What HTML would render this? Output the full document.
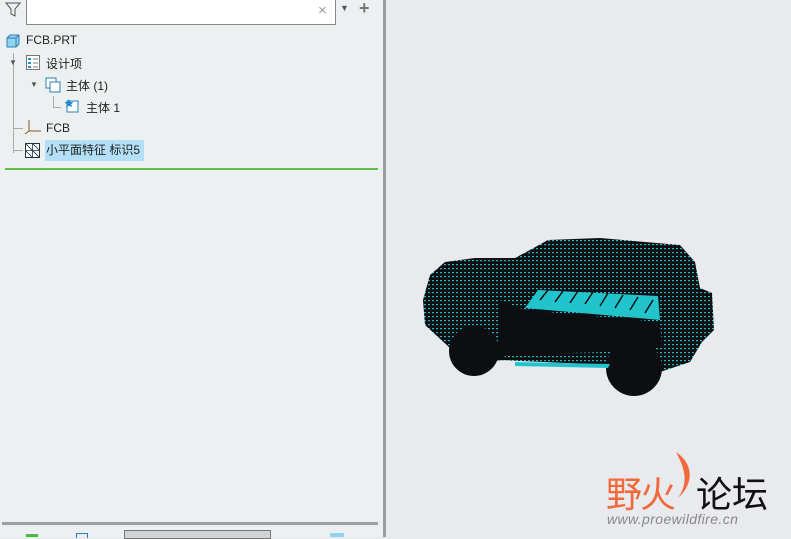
<!DOCTYPE html>
<html><head><meta charset="utf-8"><style>
body{margin:0;width:791px;height:537px;overflow:hidden;background:#e8eaee;font-family:"Liberation Sans","Noto Sans CJK SC",sans-serif;font-size:12px;color:#222;position:relative}
.left{position:absolute;left:0;top:0;width:383px;height:537px;background:#edf0f1}
.div{position:absolute;left:383px;top:0;width:3px;height:537px;background:#9a9fa3}
.t{position:absolute;white-space:nowrap}
.ln{position:absolute;background:#aaa}
</style></head><body>
<div class="left">
  <svg class="t" style="left:5px;top:1px" width="16" height="17"><path d="M1 2h14l-5 6v7l-4-2V8z" fill="none" stroke="#555" stroke-width="1"/></svg>
  <div class="t" style="left:26px;top:-1px;width:308px;height:24px;background:#fff;border:1px solid #888"></div>
  <div class="t" style="left:318px;top:2px;color:#999;font-size:15px">×</div>
  <div class="t" style="left:340px;top:3px;color:#555;font-size:9px">▼</div>
  <div class="t" style="left:359px;top:-2px;color:#777;font-size:18px;font-weight:bold">+</div>
  <svg class="t" style="left:6px;top:34px" width="14" height="14"><path d="M1 4l3-3h9v9l-3 3H1z" fill="#8fd3f0" stroke="#2f7fb0"/><path d="M1 4h9v9M10 4l3-3" fill="none" stroke="#2f7fb0"/></svg>
  <div class="t" style="left:26px;top:33px">FCB.PRT</div>
  <div class="ln" style="left:13px;top:53px;width:1px;height:100px"></div>
  <div class="t" style="left:9px;top:58px;font-size:8px;color:#555">▼</div>
  <svg class="t" style="left:26px;top:55px" width="14" height="15"><rect x="0.5" y="0.5" width="13" height="14" fill="#fff" stroke="#777"/><rect x="2" y="3" width="3" height="2" fill="#2a8fd0"/><rect x="2" y="7" width="3" height="2" fill="#2a8fd0"/><rect x="2" y="11" width="3" height="2" fill="#2a8fd0"/><path d="M7 4h5M7 8h5M7 12h5" stroke="#777"/></svg>
  <div class="t" style="left:46px;top:55px">设计项</div>
  <div class="t" style="left:30px;top:80px;font-size:8px;color:#555">▼</div>
  <svg class="t" style="left:45px;top:77px" width="17" height="17"><rect x="1" y="1" width="10" height="10" fill="#fff" stroke="#2a7fb5"/><rect x="5" y="5" width="10" height="10" fill="#fff" stroke="#2a7fb5"/></svg>
  <div class="t" style="left:66px;top:77px">主体 (1)</div>
  <div class="ln" style="left:53px;top:96px;width:1px;height:11px"></div><div class="ln" style="left:53px;top:107px;width:8px;height:1px"></div>
  <svg class="t" style="left:64px;top:98px" width="16" height="16"><rect x="3" y="3" width="11" height="11" fill="#fff" stroke="#2a7fb5"/><path d="M5 1l1.5 3 3 .3-2.3 2 .7 3-2.9-1.6L2.1 9.3l.7-3L.5 4.3l3-.3z" fill="#1e88d0"/></svg>
  <div class="t" style="left:86px;top:99px">主体 1</div>
  <div class="ln" style="left:13px;top:128px;width:10px;height:1px"></div>
  <svg class="t" style="left:24px;top:119px" width="18" height="16"><path d="M5 1v11h12M5 12l-4 3" fill="none" stroke="#7a5a20"/></svg>
  <div class="t" style="left:46px;top:121px">FCB</div>
  <div class="ln" style="left:13px;top:150px;width:10px;height:1px"></div>
  <svg class="t" style="left:25px;top:143px" width="15" height="15"><rect x="0.5" y="0.5" width="14" height="14" fill="#fff" stroke="#234"/><path d="M0 0l15 15M7 0l8 8M0 7l8 8M7.5 0v15M0 7.5h15" stroke="#234" stroke-width=".8"/></svg>
  <div class="t" style="left:45px;top:140px;height:21px;width:98px;background:#b3e0f7;line-height:21px;padding-left:1px">小平面特征 标识5</div>
  <div class="t" style="left:5px;top:168px;width:373px;height:2px;background:#5cc048"></div>
  <div class="t" style="left:2px;top:522px;width:376px;height:3px;background:#999fa3"></div>
  <div class="t" style="left:124px;top:530px;width:145px;height:7px;background:#cfd3d6;border:1px solid #777"></div>
  <div class="t" style="left:26px;top:534px;width:12px;height:3px;background:#4cb648"></div>
  <div class="t" style="left:76px;top:533px;width:10px;height:4px;border:1px solid #2a7fb5;border-bottom:none"></div>
  <div class="t" style="left:330px;top:533px;width:14px;height:4px;background:#8fd3f0"></div>
</div>
<div class="div"></div>
<svg class="t" style="left:415px;top:232px" width="310" height="170" viewBox="415 232 310 170">
<defs><pattern id="m" width="4" height="4" patternUnits="userSpaceOnUse"><rect width="4" height="4" fill="#0c0e12"/><rect width="2" height="1.2" fill="#22b8c0"/></pattern></defs>
<path d="M423 300L430 275L445 262L475 258L515 258L530 250L548 240L600 238L680 245L695 262L700 288L712 293L714 330L702 342L690 362L660 372L610 365L500 360L475 362L450 348L425 325Z" fill="url(#m)"/>
<path d="M500 300L525 310L660 322L662 345L640 352L605 352L500 355Z" fill="#0c0e12"/>
<path d="M525 308L538 290L658 296L660 320Z" fill="#22c4cc"/>
<path d="M540 300l8 -10M555 302l8-11M570 303l8-12M585 304l8-12M600 306l8-13M615 308l8-13M630 310l8-13M645 313l8-13" stroke="#0c0e12" stroke-width="1.5"/>
<path d="M455 340L503 342L505 360L470 362Z" fill="#0c0e12"/>
<circle cx="474" cy="351" r="25" fill="#0c0e12"/><circle cx="634" cy="368" r="28" fill="#0c0e12"/>
<path d="M515 362L610 364L608 368L515 366Z" fill="#22c4cc"/>
</svg>
<div class="t" style="left:606px;top:466px;font-size:36px;color:#f26a3c;letter-spacing:-2px">野火</div>
<svg class="t" style="left:666px;top:450px" width="30" height="50"><path d="M10 2C28 14 28 34 12 48C22 34 20 20 10 2Z" fill="#f26a3c"/></svg>
<div class="t" style="left:696px;top:466px;font-size:36px;color:#111">论坛</div>
<div class="t" style="left:607px;top:511px;font-size:14px;color:#888;font-style:italic;letter-spacing:0.4px">www.proewildfire.cn</div>
</body></html>
